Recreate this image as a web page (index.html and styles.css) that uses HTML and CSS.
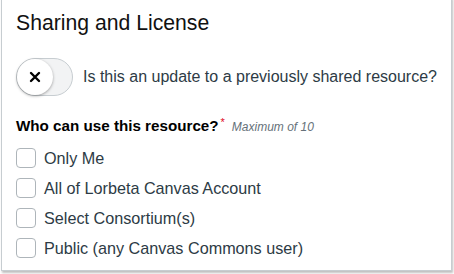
FILE: index.html
```html
<!DOCTYPE html>
<html>
<head>
<meta charset="utf-8">
<link rel="stylesheet" href="styles.css">
</head>
<body>
<div class="card">
  <h2 class="title">Sharing and License</h2>
  <div class="toggle-row">
    <div class="toggle">
      <div class="knob">
        <svg width="12" height="12" viewBox="0 0 12 12"><path d="M2 2 L10 10 M10 2 L2 10" stroke="#000" stroke-width="2.4" stroke-linecap="round"/></svg>
      </div>
    </div>
    <span class="toggle-label">Is this an update to a previously shared resource?</span>
  </div>
  <div class="question">
    <span class="q-text">Who can use this resource?</span><span class="req">*</span>
    <span class="hint">Maximum of 10</span>
  </div>
  <ul class="options">
    <li class="option"><span class="box"></span><span>Only Me</span></li>
    <li class="option"><span class="box"></span><span>All of Lorbeta Canvas Account</span></li>
    <li class="option"><span class="box"></span><span>Select Consortium(s)</span></li>
    <li class="option"><span class="box"></span><span>Public (any Canvas Commons user)</span></li>
  </ul>
</div>
</body>
</html>
```
FILE: styles.css
```css
html, body { margin: 0; padding: 0; background: #fff; }
body { font-family: "Liberation Sans", Arial, sans-serif; color: #2d3b45; width: 454px; height: 274px; overflow: hidden; }
.card {
  box-sizing: border-box;
  width: 451px;
  height: 274px;
  margin-left: 1px;
  margin-top: -3px;
  border: 1px solid #c7cdd1;
  box-shadow: 1px 2px 2px rgba(0,0,0,0.25);
  padding: 11px 0 0 14px;
  background: #fff;
}
.title { margin: 0; font-size: 21.2px; font-weight: normal; color: #111; line-height: 28px; }
.toggle-row { display: flex; align-items: center; margin-top: 21px; }
.toggle {
  box-sizing: border-box;
  width: 57px; height: 38px;
  border-radius: 19px;
  border: 1px solid #c7cdd1;
  background: #f2f3f4;
  position: relative;
  flex: none;
}
.knob {
  position: absolute; left: 0; top: 0;
  width: 36px; height: 36px; border-radius: 50%;
  background: #fff;
  box-shadow: 0 1px 3px rgba(0,0,0,0.35);
  display: flex; align-items: center; justify-content: center;
}
.toggle-label { margin-left: 10px; font-size: 16px; color: #2d3b45; }
.question { margin-top: 21px; display: flex; align-items: baseline; }
.q-text { font-size: 15.2px; font-weight: bold; color: #000; }
.req { color: #e0061f; font-size: 11px; position: relative; top: -5px; margin-left: 2px; }
.hint { font-size: 12px; font-style: italic; color: #66717a; margin-left: 7px; }
.options { list-style: none; margin: 9px 0 0 0; padding: 0; }
.option { display: flex; align-items: center; height: 30px; font-size: 16.2px; color: #2d3b45; }
.box {
  box-sizing: border-box;
  width: 20px; height: 20px;
  border: 1px solid #aeb5ba;
  border-radius: 4px;
  margin-right: 8px;
  background: #fff;
  flex: none;
}
```
